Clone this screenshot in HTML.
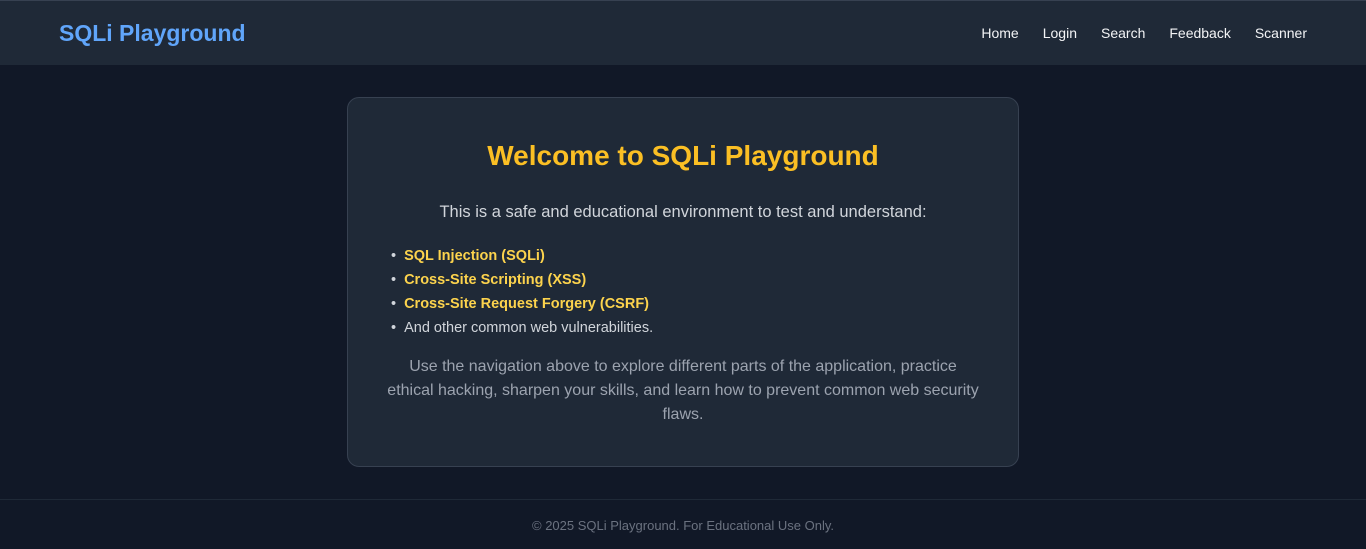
<!DOCTYPE html>
<html><head><meta charset="utf-8"><style>
*{margin:0;padding:0;box-sizing:border-box}
body{width:1366px;height:549px;background:#111827;font-family:"Liberation Sans",sans-serif;color:#d1d5db;position:relative;overflow:hidden}
.nav{position:absolute;top:0;left:0;width:1366px;height:65px;background:#1f2937;border-top:1px solid #374151}
.logo{position:absolute;left:59px;top:19px;font-size:23px;font-weight:bold;color:#60a5fa}
.links{position:absolute;right:59px;top:24px;font-size:14px;color:#f3f4f6}
.links span{margin-left:24px}
.card{position:absolute;left:347px;top:97px;width:672px;height:370px;background:#1f2937;border:1px solid #374151;border-radius:12px;text-align:center}
h1{position:absolute;top:42px;width:100%;font-size:28px;color:#fbbf24;font-weight:bold}
.p1{position:absolute;top:105px;width:100%;font-size:16.5px;color:#d1d5db}
ul{position:absolute;top:146px;left:43px;text-align:left;list-style:none;font-size:14.5px;line-height:24px}
ul li:before{content:"•";margin-right:8px;color:#d1d5db}
ul b{color:#fcd34d}
.p2{position:absolute;top:257px;left:10px;right:10px;font-size:16px;line-height:24px;color:#9ca3af;white-space:nowrap}
.foot{position:absolute;top:499px;left:0;width:1366px;height:50px;border-top:1px solid #1f2937;text-align:center;font-size:13px;color:#6b7280;padding-top:18px}
</style></head><body>
<div class="nav"><div class="logo">SQLi Playground</div>
<div class="links"><span>Home</span><span>Login</span><span>Search</span><span>Feedback</span><span>Scanner</span></div></div>
<div class="card">
<h1>Welcome to SQLi Playground</h1>
<div class="p1">This is a safe and educational environment to test and understand:</div>
<ul><li><b>SQL Injection (SQLi)</b></li><li><b>Cross-Site Scripting (XSS)</b></li><li><b>Cross-Site Request Forgery (CSRF)</b></li><li>And other common web vulnerabilities.</li></ul>
<div class="p2">Use the navigation above to explore different parts of the application, practice<br>ethical hacking, sharpen your skills, and learn how to prevent common web security<br>flaws.</div>
</div>
<div class="foot">© 2025 SQLi Playground. For Educational Use Only.</div>
</body></html>
